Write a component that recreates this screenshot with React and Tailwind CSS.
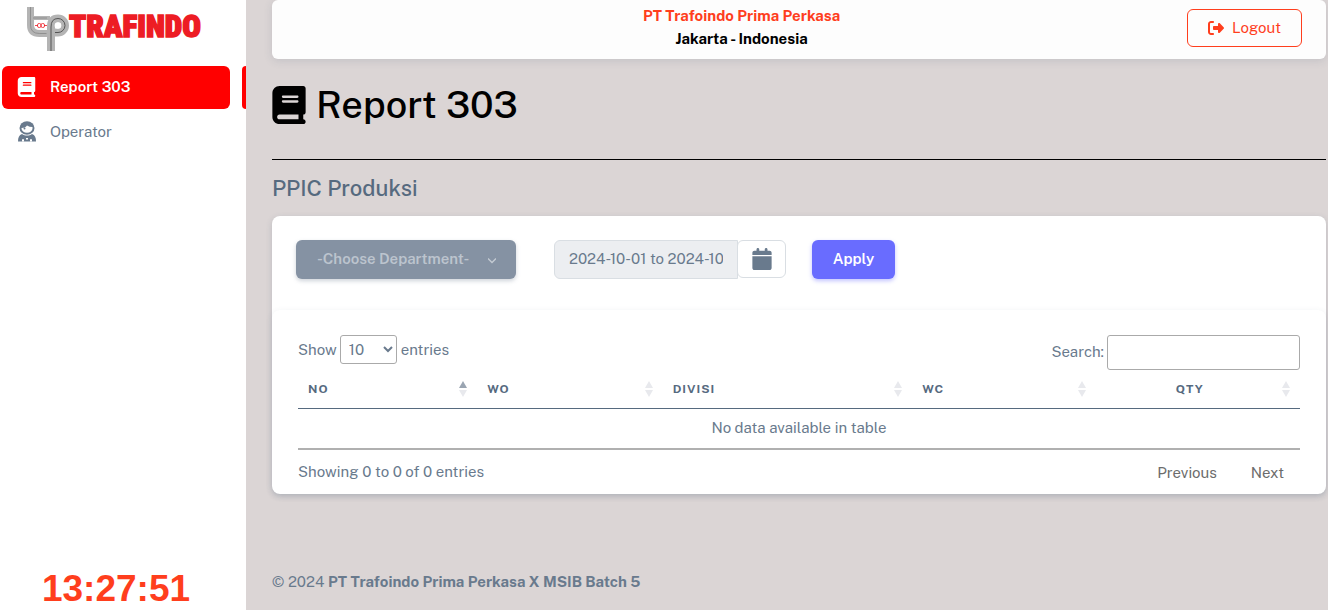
import { useState } from "react"
import { FaBook, FaCalendar, FaRightFromBracket } from "react-icons/fa6"

const columns = [
    { name: "NO", width: "w-[17.9%]", align: "text-left", sorted: true },
    { name: "WO", width: "w-[18.5%]", align: "text-left" },
    { name: "DIVISI", width: "w-[24.9%]", align: "text-left" },
    { name: "WC", width: "w-[18.3%]", align: "text-left" },
    { name: "QTY", width: "w-[20.4%]", align: "text-center" },
]

function Logo() {
    return (
        <svg className="h-[46px] w-[190px]" viewBox="0 0 190 46" role="img" aria-label="Trafindo">
            <g fill="none" strokeLinejoin="round">
                <path d="M4.500 1v18q0 8.500 9 8.500h9" stroke="#b4b4b4" strokeWidth="7" />
                <path d="M7 12h17" stroke="#b4b4b4" strokeWidth="4" />
                <path d="M4.500 1v18q0 8.500 9 8.500h7M7 12h14" stroke="#808080" strokeWidth=".7" />
                <path d="M25 45V21q0-8.500 7-8.500a7 7 0 0 1 0 14h-3" stroke="#b4b4b4" strokeWidth="8" />
                <path d="M25 45V21q0-8.500 7-8.500a7 7 0 0 1 0 14h-3" stroke="#555" strokeWidth="1" />
                <circle cx="32" cy="19.500" r="3.300" fill="#fff" />
                <path d="M9 19.500h3m6 0h3" stroke="#ed1c24" strokeWidth=".8" />
                <rect x="11.500" y="17.500" width="3.500" height="4" rx="1.500" stroke="#ed1c24" strokeWidth=".8" />
                <rect x="15" y="17.500" width="3.500" height="4" rx="1.500" stroke="#ed1c24" strokeWidth=".8" />
            </g>
            <text x="43" y="31" fill="#ed1c24" stroke="#ed1c24" strokeWidth="1.500" className="font-['Roboto_Condensed','Open_Sans_Condensed',Roboto,sans-serif] text-[31px] font-black">TRAFINDO</text>
        </svg>
    )
}

function OperatorIcon() {
    return (
        <svg className="h-[21px] w-[18px]" viewBox="0 0 18 21" aria-hidden="true">
            <ellipse cx="9" cy="7" rx="7.500" ry="6.800" fill="#697a8d" />
            <path d="M3.500 7q4 0 5.500-2.500Q11.500 6 14.500 6v1.500a5.500 4.200 0 0 1-11 0z" fill="#fff" />
            <circle cx="6.500" cy="7.500" r="1" fill="#697a8d" />
            <path d="M0 20.500c0-4 1-6.500 4-7.500 3 2 7 2 10 0 3 1 4 3.500 4 7.500z" fill="#697a8d" />
            <path d="M4 20.500v-1.500a1 1 0 0 1 2 0v1.500zm8 0v-1.500a1 1 0 0 1 2 0v1.500zM8 17h2v1.500H8z" fill="#fff" />
        </svg>
    )
}

function SortIcon({ sorted }) {
    return (
        <svg className="h-4 w-2 shrink-0" viewBox="0 0 8 16" aria-hidden="true">
            <path d="M0 7 4 0l4 7z" fill={sorted ? "#9aa5b2" : "#e8e9ed"} />
            <path d="M0 9h8l-4 7z" fill="#e8e9ed" />
        </svg>
    )
}

function Sidebar() {
    return (
        <aside className="flex w-[246px] shrink-0 flex-col bg-white">
            <a href="#" className="flex pt-[6px] pl-[26px]"><Logo /></a>
            <nav className="mt-[14px] flex flex-col gap-[2px]">
                <div className="flex justify-between">
                    <a href="#report" className="ml-[2px] flex h-[43px] w-[228px] items-center gap-[14px] rounded-md bg-[#ff0000] pb-[2px] pl-[15px] font-semibold text-white">
                        <FaBook className="h-[20px] w-[19px]" />
                        Report 303
                    </a>
                    <span className="w-1 rounded-l-md bg-[#ff0000]"></span>
                </div>
                <a href="#operator" className="ml-[2px] flex h-[43px] w-[228px] items-center gap-[14px] rounded-md pb-[2px] pl-4">
                    <OperatorIcon />
                    Operator
                </a>
            </nav>
            <time className="mt-auto pr-[14px] text-center font-['Liberation_Sans',Arial,sans-serif] text-[37px] leading-[42px] font-bold text-[#ff3e1d]">13:27:51</time>
        </aside>
    )
}

function Header() {
    return (
        <header className="flex h-[59px] items-center rounded-md bg-[#fdfdfd] pr-6 pb-1 shadow-[0_2px_8px_rgba(67,89,113,0.15)]">
            <div className="flex-1 pb-[2px] pl-6 text-center leading-[23px] font-bold text-black">
                <p className="text-[#ff3e1d]">PT Trafoindo Prima Perkasa</p>
                <p>Jakarta - Indonesia</p>
            </div>
            <button className="flex h-[38px] items-center gap-2 rounded-md border border-[#ff3e1d] px-5 text-[#ff3e1d]">
                <FaRightFromBracket className="size-4" />
                Logout
            </button>
        </header>
    )
}

function Filters() {
    return (
        <form className="flex items-start px-6 pt-6 pb-[31px]" onSubmit={(e) => e.preventDefault()}>
            <div className="relative">
                <select aria-label="Department" disabled className="h-[39px] w-[220px] appearance-none rounded-md bg-[#8592a3] pb-[2px] pl-[21px] font-semibold text-[#bcc4ce] shadow-[0_2px_4px_rgba(133,146,163,0.4)]">
                    <option>-Choose Department-</option>
                </select>
                <svg className="pointer-events-none absolute top-4 right-5 h-2 w-2" viewBox="0 0 8 8" fill="none" stroke="#c4cbd3" strokeWidth="1.300" aria-hidden="true">
                    <path d="m0 2.500 4 4 4-4" />
                </svg>
            </div>
            <input aria-label="Date range" readOnly defaultValue="2024-10-01 to 2024-10-31" className="ml-[38px] h-[39px] w-[184px] rounded-l-md border border-[#d9dee3] bg-[#eceef1] px-[14px] pb-[2px]" />
            <button type="button" aria-label="Open calendar" className="-ml-px flex h-[38px] w-[49px] items-center justify-center rounded-md border border-[#d9dee3] bg-white">
                <FaCalendar className="h-[22px] w-5" />
            </button>
            <button className="ml-[26px] h-[39px] w-[83px] rounded-md bg-[#696cff] pb-[2px] font-semibold text-white shadow-[0_2px_4px_rgba(105,108,255,0.4)]">Apply</button>
        </form>
    )
}

function ReportTable() {
    const [search, setSearch] = useState("")

    return (
        <div className="rounded-lg px-[26px] pt-[25px] pb-[10px] shadow-[0_2px_6px_rgba(67,89,113,0.12)]">
            <div className="flex items-start justify-between">
                <label className="flex items-center gap-[3px]">
                    Show
                    <select className="mr-px h-[29px] w-[57px] rounded-[3px] border border-[#aaa] pl-1">
                        <option>10</option>
                        <option>25</option>
                        <option>50</option>
                        <option>100</option>
                    </select>
                    entries
                </label>
                <label className="flex items-center gap-[3px]">
                    <span className="pb-[2px]">Search:</span>
                    <input type="search" value={search} onChange={(e) => setSearch(e.target.value)} className="h-[35px] w-[193px] rounded-[3px] border border-[#aaa] px-2" />
                </label>
            </div>
            <table className="w-full table-fixed border-b-2 border-[#b0b0b0]">
                <thead>
                    <tr className="h-[38px] border-b border-[#566a7f]">
                        {columns.map((col) => (
                            <th key={col.name} className={`${col.width} ${col.align} px-[10px] text-xs font-bold tracking-[1px] text-[#566a7f]`}>
                                <div className="flex items-center gap-2">
                                    <span className="flex-1">{col.name}</span>
                                    <SortIcon sorted={col.sorted} />
                                </div>
                            </th>
                        ))}
                    </tr>
                </thead>
                <tbody>
                    <tr className="h-[41px]">
                        <td colSpan={5} className="pb-[2px] text-center">No data available in table</td>
                    </tr>
                </tbody>
            </table>
            <div className="flex items-start justify-between pt-[10px]">
                <p>Showing 0 to 0 of 0 entries</p>
                <div className="flex gap-[34px] pt-px pr-4 text-[#6c6c6c]">
                    <button>Previous</button>
                    <button>Next</button>
                </div>
            </div>
        </div>
    )
}

export default function App() {
    return (
        <div className="flex min-h-screen bg-[#dbd5d5] font-['Public_Sans',Inter,sans-serif] text-[15px] leading-[23px] text-[#697a8d]">
            <Sidebar />
            <div className="flex min-w-0 flex-1 flex-col pr-[2px] pl-[26px]">
                <Header />
                <main>
                    <h1 className="flex items-center gap-[10px] border-b border-black pt-[18px] pb-[26px] text-[38px] leading-[56px] font-medium text-black">
                        <FaBook className="h-[38px] w-[34px]" />
                        Report 303
                    </h1>
                    <h2 className="py-[14px] text-[22px] leading-7 font-medium text-[#566a7f]">PPIC Produksi</h2>
                    <section className="rounded-lg bg-white shadow-[0_2px_6px_rgba(67,89,113,0.2)]">
                        <Filters />
                        <ReportTable />
                    </section>
                </main>
                <footer className="mt-auto pb-[17px]">
                    © 2024 <a href="#" className="font-bold">PT Trafoindo Prima Perkasa X MSIB Batch 5</a>
                </footer>
            </div>
        </div>
    )
}
